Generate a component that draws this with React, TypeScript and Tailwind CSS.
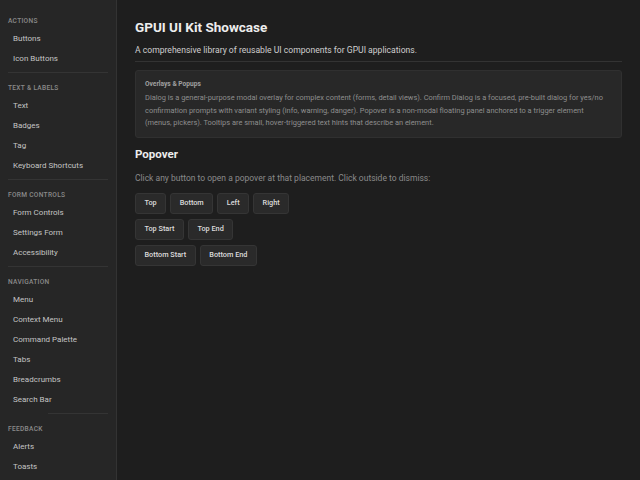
const SECTIONS: { title: string; items: string[] }[] = [
  { title: "Actions", items: ["Buttons", "Icon Buttons"] },
  { title: "Text & Labels", items: ["Text", "Badges", "Tag", "Keyboard Shortcuts"] },
  { title: "Form Controls", items: ["Form Controls", "Settings Form", "Accessibility"] },
  { title: "Navigation", items: ["Menu", "Context Menu", "Command Palette", "Tabs", "Breadcrumbs", "Search Bar"] },
  { title: "Feedback", items: ["Alerts", "Toasts"] },
];

const ROWS = [
  ["Top", "Bottom", "Left", "Right"],
  ["Top Start", "Top End"],
  ["Bottom Start", "Bottom End"],
];

function Sidebar() {
  return (
    <aside className="flex h-full w-[117px] shrink-0 flex-col overflow-hidden border-r border-[#333333] bg-[#262626] px-[8px] pt-[15px]">
      {SECTIONS.map((s, i) => (
        <div key={s.title}>
          {i > 0 && (
            <div className={`mt-[3px] mb-[9px] h-px bg-[#343434] ${s.title === "Feedback" ? "ml-[40px]" : ""}`} />
          )}
          <div className="mb-[2px] h-[12px] text-[6.6px] font-medium uppercase leading-[12px] tracking-[0.3px] text-[#8a8a8a]">
            {s.title}
          </div>
          {s.items.map((it) => (
            <div key={it} className="h-[20px] pl-[5px] text-[8px] leading-[20px] text-[#c4c4c4]">
              {it}
            </div>
          ))}
        </div>
      ))}
    </aside>
  );
}

export default function App() {
  return (
    <div
      className="flex h-[480px] w-[640px] overflow-hidden bg-[#1e1e1e]"
      style={{ fontFamily: "Roboto, 'Noto Sans', sans-serif" }}
    >
      <Sidebar />
      <main className="flex-1 px-[18px] pt-[18px]">
        <h1 className="text-[13.5px] font-bold leading-[18px] text-[#ededed]">GPUI UI Kit Showcase</h1>
        <p className="mt-[8px] text-[8.6px] leading-[12px] text-[#cfcfcf]">
          A comprehensive library of reusable UI components for GPUI applications.
        </p>
        <div className="mt-[5px] border-t border-[#333333]" />
        <div className="mt-[8px] rounded-[3px] border border-[#303030] bg-[#282828] pb-[7px] pl-[9px] pr-[16px] pt-[8px]">
          <div className="text-[6.6px] font-bold leading-[10px] text-[#a0a0a0]">Overlays &amp; Popups</div>
          <p className="mt-[3px] text-[7.45px] leading-[12.5px] text-[#8e8e8e]">
            Dialog is a general-purpose modal overlay for complex content (forms, detail views). Confirm Dialog is a focused, pre-built dialog for yes/no confirmation prompts with variant styling (info, warning, danger). Popover is a non-modal floating panel anchored to a trigger element (menus, pickers). Tooltips are small, hover-triggered text hints that describe an element.
          </p>
        </div>
        <h2 className="mt-[9px] text-[11.5px] font-bold leading-[14px] text-[#ededed]">Popover</h2>
        <p className="mt-[11px] text-[8.5px] leading-[12px] text-[#8a8a8a]">
          Click any button to open a popover at that placement. Click outside to dismiss:
        </p>
        <div className="mt-[9px] flex flex-col gap-[5px]">
          {ROWS.map((row, i) => (
            <div key={i} className="flex gap-[4px]">
              {row.map((b) => (
                <button
                  key={b}
                  className="h-[21px] rounded-[3px] border border-[#353535] bg-[#2a2a2a] px-[8.5px] text-[7.3px] font-medium text-[#dcdcdc]"
                >
                  {b}
                </button>
              ))}
            </div>
          ))}
        </div>
      </main>
    </div>
  );
}
